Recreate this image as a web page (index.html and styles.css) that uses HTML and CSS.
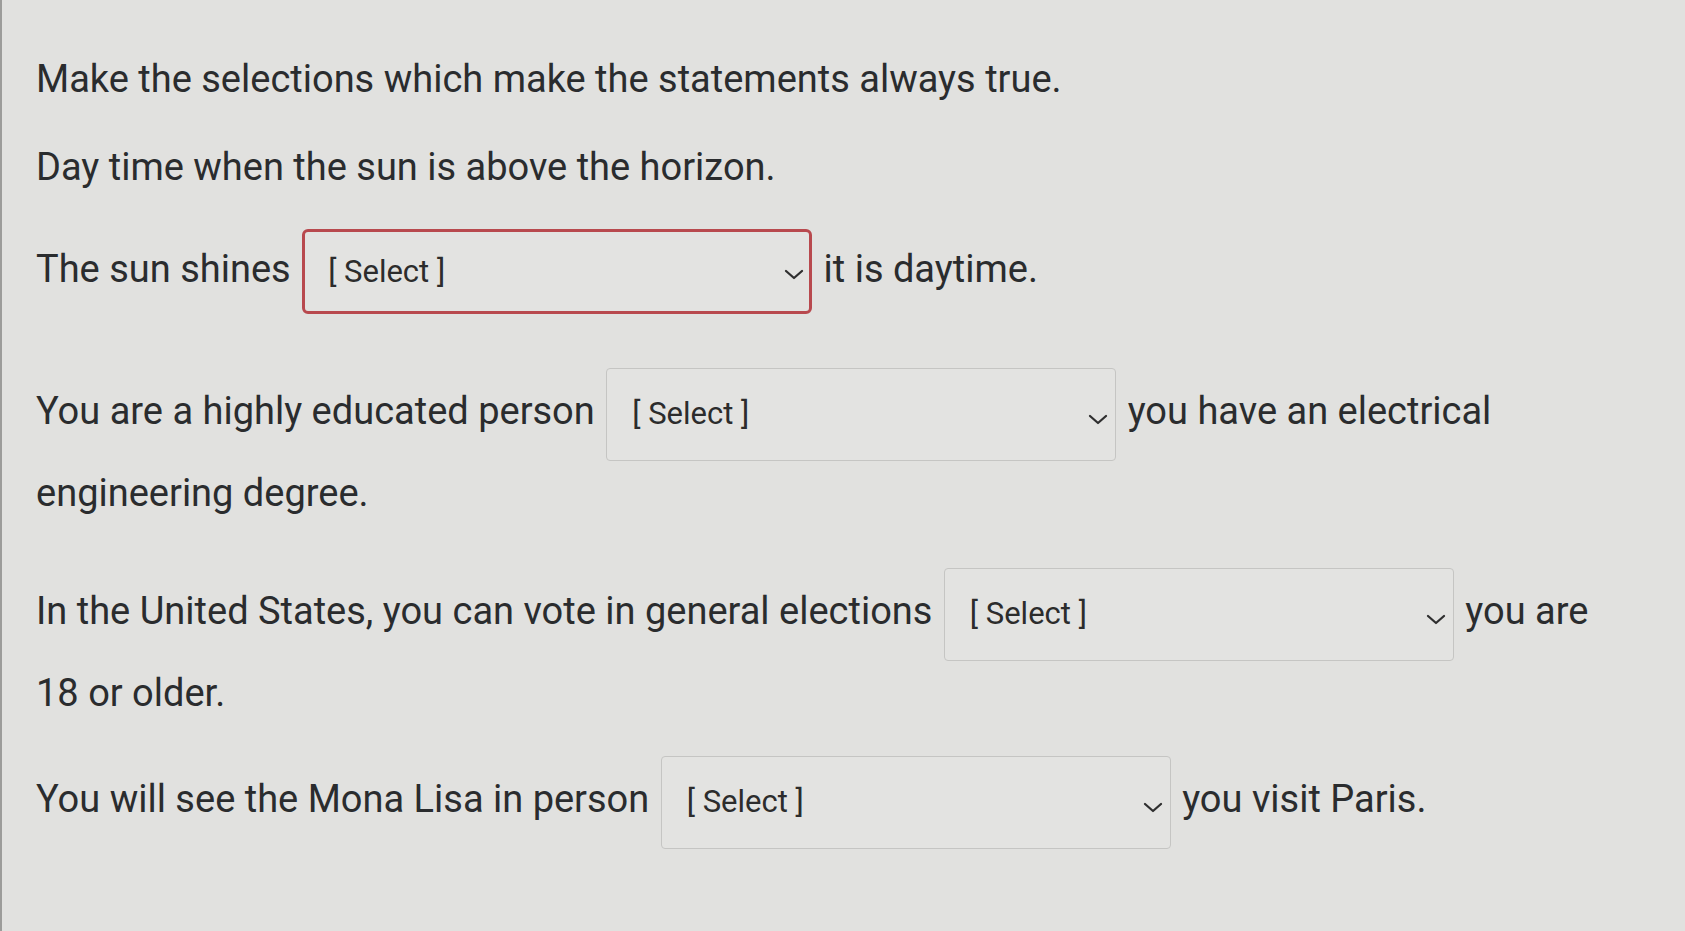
FILE: index.html
```html
<!DOCTYPE html>
<html lang="en">
<head>
<meta charset="utf-8">
<title>Quiz question</title>
<link rel="stylesheet" href="styles.css">
</head>
<body>
<main class="question">
  <p class="prompt">Make the selections which make the statements always true.</p>
  <p class="prompt prompt--second">Day time when the sun is above the horizon.</p>

  <p class="item item--first"><span>The sun shines</span> <span class="select select--error"><span class="select-label">[ Select ]</span><svg class="chev" viewBox="0 0 20 11" width="20" height="11"><path d="M2 2 L10 9 L18 2" fill="none" stroke="#2f2f2f" stroke-width="2.3" stroke-linecap="round" stroke-linejoin="round"/></svg></span> <span>it is daytime.</span></p>

  <p class="item"><span>You are a highly educated person</span> <span class="select"><span class="select-label">[ Select ]</span><svg class="chev" viewBox="0 0 20 11" width="20" height="11"><path d="M2 2 L10 9 L18 2" fill="none" stroke="#2f2f2f" stroke-width="2.3" stroke-linecap="round" stroke-linejoin="round"/></svg></span> <span>you have an electrical</span> <span>engineering degree.</span></p>

  <p class="item item--tight"><span>In the United States, you can vote in general elections</span> <span class="select"><span class="select-label">[ Select ]</span><svg class="chev" viewBox="0 0 20 11" width="20" height="11"><path d="M2 2 L10 9 L18 2" fill="none" stroke="#2f2f2f" stroke-width="2.3" stroke-linecap="round" stroke-linejoin="round"/></svg></span> <span>you are</span> <span>18 or older.</span></p>

  <p class="item"><span>You will see the Mona Lisa in person</span> <span class="select"><span class="select-label">[ Select ]</span><svg class="chev" viewBox="0 0 20 11" width="20" height="11"><path d="M2 2 L10 9 L18 2" fill="none" stroke="#2f2f2f" stroke-width="2.3" stroke-linecap="round" stroke-linejoin="round"/></svg></span> <span>you visit Paris.</span></p>
</main>
</body>
</html>
```

FILE: styles.css
```css
html, body {
  margin: 0;
  padding: 0;
  height: 100%;
}

body {
  background: #e1e1df;
  border-left: 2px solid #9c9c9a;
  box-sizing: border-box;
  font-family: "Roboto", "Liberation Sans", sans-serif;
  color: #2a2c2e;
}

.question {
  padding: 51px 0 0 34px;
  width: 1590px;
}

.prompt {
  margin: 0;
  font-size: 38px;
  line-height: 56px;
}

.prompt--second {
  margin-top: 32px;
  margin-bottom: 34px;
}

.item {
  margin: 0 0 42px 0;
  font-size: 38px;
  line-height: 65px;
}

.item--first {
  margin-bottom: 54px;
}

.item--tight {
  margin-bottom: 30px;
}

.select {
  display: inline-flex;
  align-items: flex-start;
  justify-content: space-between;
  box-sizing: border-box;
  width: 510px;
  height: 93px;
  margin: 0 2px;
  padding: 0 7px 0 25px;
  border: 1px solid #c5c5c3;
  border-radius: 4px;
  background: #e3e3e1;
  vertical-align: baseline;
}

.select--error {
  height: 85px;
  border: 3px solid #b8494e;
  border-radius: 6px;
  padding: 0 5px 0 23px;
}

.select-label {
  font-size: 31px;
  line-height: 1;
  padding-top: 29px;
  color: #2c2c2c;
}

.select--error .select-label {
  padding-top: 24px;
}

.chev {
  margin-top: 45px;
  flex: none;
}

.select--error .chev {
  margin-top: 37px;
}
```
